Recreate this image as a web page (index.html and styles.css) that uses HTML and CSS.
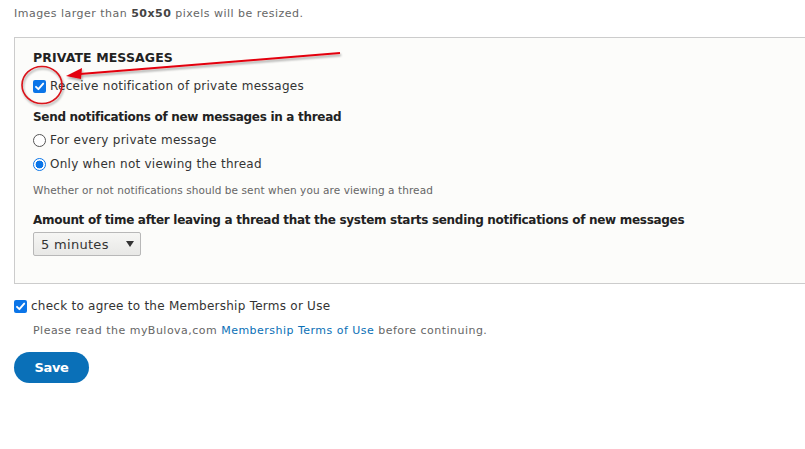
FILE: index.html
```html
<!DOCTYPE html>
<html>
<head>
<meta charset="utf-8">
<link rel="stylesheet" href="styles.css">
</head>
<body>
<div class="page">
  <p class="help wide top-help">Images larger than <strong>50x50</strong> pixels will be resized.</p>

  <div class="fieldset">
    <h2 class="legend">PRIVATE MESSAGES</h2>
    <label class="check-row">
      <span class="cbox"><svg viewBox="0 0 13 13" width="13" height="13"><rect x="0" y="0" width="13" height="13" rx="2" fill="#0b75e8"/><path d="M3 6.8 L5.4 9.2 L10.2 3.6" fill="none" stroke="#fff" stroke-width="1.9" stroke-linecap="round" stroke-linejoin="round"/></svg></span>
      <span>Receive notification of private messages</span>
    </label>

    <div class="group">
      <div class="group-title">Send notifications of new messages in a thread</div>
      <label class="radio-row"><span class="radio"></span><span>For every private message</span></label>
      <label class="radio-row"><span class="radio on"></span><span>Only when not viewing the thread</span></label>
      <div class="help desc">Whether or not notifications should be sent when you are viewing a thread</div>
    </div>

    <div class="group">
      <div class="group-title">Amount of time after leaving a thread that the system starts sending notifications of new messages</div>
      <div class="select"><span>5 minutes</span><span class="caret"></span></div>
    </div>
  </div>

  <label class="check-row agree">
    <span class="cbox"><svg viewBox="0 0 13 13" width="13" height="13"><rect x="0" y="0" width="13" height="13" rx="2" fill="#0b75e8"/><path d="M3 6.8 L5.4 9.2 L10.2 3.6" fill="none" stroke="#fff" stroke-width="1.9" stroke-linecap="round" stroke-linejoin="round"/></svg></span>
    <span>check to agree to the Membership Terms or Use</span>
  </label>
  <div class="help wide agree-desc">Please read the myBulova,com <a href="#">Membership Terms of Use</a> before continuing.</div>

  <button class="save">Save</button>

  <svg class="annot" width="805" height="449" viewBox="0 0 805 449">
    <defs>
      <filter id="sh" x="-10%" y="-50%" width="120%" height="200%">
        <feDropShadow dx="1" dy="2" stdDeviation="1.2" flood-color="#000" flood-opacity="0.35"/>
      </filter>
    </defs>
    <g filter="url(#sh)">
      <path d="M340 53 L80 74" stroke="#e3000f" stroke-width="2" fill="none"/>
      <path d="M66 76 L82 68 L81 79 Z" fill="#e3000f"/>
      <ellipse cx="42" cy="85" rx="20" ry="18.5" stroke="#d9121a" stroke-width="1.6" fill="none"/>
    </g>
  </svg>
</div>
</body>
</html>
```
FILE: styles.css
```css
html, body {
  margin: 0;
  padding: 0;
  background: #fff;
}
body {
  font-family: "DejaVu Sans", Verdana, sans-serif;
  font-size: 12px;
  color: #333;
  letter-spacing: 0.25px;
  width: 805px;
  height: 449px;
  overflow: hidden;
}
.page {
  position: relative;
  padding: 0 0 0 14px;
  height: 449px;
}
.help {
  font-size: 10.5px;
  color: #666;
  letter-spacing: 0.08px;
}
.help.wide {
  font-size: 11px;
  letter-spacing: 0.48px;
}
.top-help {
  margin: 0;
  padding-top: 8px;
  line-height: 12px;
}
.top-help strong {
  color: #444;
}
.fieldset {
  margin-top: 17px;
  border: 1px solid #ccc;
  border-right: none;
  background: #fcfcfa;
  padding: 12px 0 0 18px;
  height: 233px;
  box-sizing: content-box;
}
.legend {
  margin: 0;
  font-size: 12.5px;
  font-weight: bold;
  color: #222;
  line-height: 15px;
  letter-spacing: 0.1px;
}
.check-row {
  display: flex;
  align-items: center;
  gap: 4px;
  margin-top: 13px;
  line-height: 16px;
  color: #333;
}
.cbox {
  display: inline-flex;
  width: 13px;
  height: 13px;
}
.group {
  margin-top: 15px;
}
.group-title {
  font-weight: bold;
  color: #222;
  line-height: 16px;
  letter-spacing: -0.3px;
}
.radio-row {
  display: flex;
  align-items: center;
  gap: 4px;
  margin-top: 7px;
  line-height: 16px;
}
.radio-row + .radio-row {
  margin-top: 8px;
}
.radio {
  width: 11px;
  height: 11px;
  border: 1px solid #555;
  border-radius: 50%;
  background: #fff;
  box-sizing: content-box;
}
.radio.on {
  border-color: #0b75e8;
  background: radial-gradient(circle, #0b75e8 0 3.6px, #fff 4.2px);
}
.desc {
  margin-top: 12px;
  line-height: 13px;
}
.group + .group {
  margin-top: 15px;
}
.select {
  margin-top: 4px;
  height: 22px;
  border: 1px solid #b8b8b8;
  border-radius: 2px;
  background: linear-gradient(#f6f6f4, #e8e8e6);
  display: flex;
  align-items: center;
  justify-content: space-between;
  padding: 0 6px 0 7px;
  box-sizing: content-box;
  width: 93px;
  color: #333;
  font-size: 13px;
  letter-spacing: 0.3px;
}
.caret {
  width: 0;
  height: 0;
  border-left: 4.5px solid transparent;
  border-right: 4.5px solid transparent;
  border-top: 6px solid #333;
}
.agree {
  margin-top: 14px;
}
.agree-desc {
  margin-top: 10px;
  padding-left: 19px;
  line-height: 13px;
}
.agree-desc a {
  color: #0a70b6;
  text-decoration: none;
}
.save {
  margin-top: 15px;
  display: block;
  width: 75px;
  height: 31px;
  border: none;
  border-radius: 16px;
  background: #0a70b8;
  color: #fff;
  font-family: "DejaVu Sans", sans-serif;
  font-weight: bold;
  font-size: 13px;
  padding: 0;
  letter-spacing: -0.3px;
}
.annot {
  position: absolute;
  left: 0;
  top: 0;
  pointer-events: none;
}
```
